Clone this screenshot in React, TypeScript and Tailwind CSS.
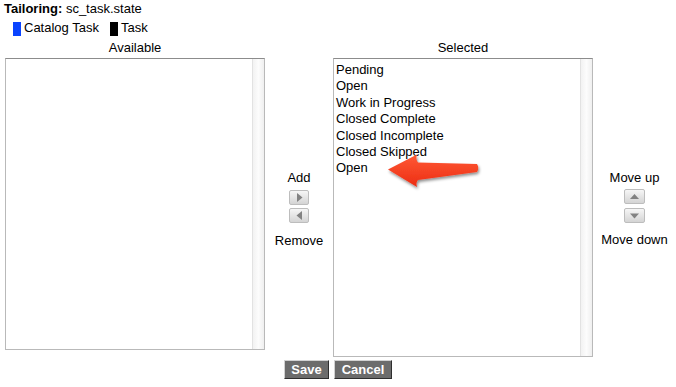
import React from "react";

function ArrowBtn({ dir }: { dir: "right" | "left" | "up" | "down" }) {
  const pts: Record<string, string> = {
    right: "7,2 12.5,6.5 7,11",
    left: "12,2 6.5,6.5 12,11",
    up: "5,9 9.5,4 14,9",
    down: "5,4.5 9.5,9.5 14,4.5",
  };
  const w = dir === "up" || dir === "down" ? 21 : 20;
  return (
    <div
      className={`${w === 21 ? "w-[21px]" : "w-[20px]"} h-[15px] rounded-[2px] border border-[#bdbdbd] bg-gradient-to-b from-[#f6f6f6] to-[#d4d4d4]`}
    >
      <svg width={w - 2} height={13} viewBox={`0 0 ${w - 2} 13`} className="block">
        <polygon points={pts[dir]} fill="#828282" />
      </svg>
    </div>
  );
}

function ListBox({ h, children }: { h: string; children?: React.ReactNode }) {
  return (
    <div
      className={`${h} w-[260px] flex border border-[#b9b9b9] border-t-[#8c8c8c] bg-white`}
    >
      <div className="flex-1 pl-[2px] pt-[3px] leading-[16.4px]">{children}</div>
      <div className="w-[12px] border-l border-[#e2e2e2] bg-gradient-to-r from-[#f2f2f2] via-[#fcfcfc] to-[#efefef]" />
    </div>
  );
}

export default function App() {
  const items = [
    "Pending",
    "Open",
    "Work in Progress",
    "Closed Complete",
    "Closed Incomplete",
    "Closed Skipped",
    "Open",
  ];
  return (
    <div
      className="relative w-[676px] h-[387px] bg-white text-black text-[13px] overflow-hidden"
      style={{ fontFamily: '"Liberation Sans", Arial, sans-serif' }}
    >
      <div className="pl-[4px] pt-[1px] leading-[16px]">
        <span className="font-bold">Tailoring:</span> sc_task.state
      </div>
      <div className="flex items-center h-[16px] mt-[3px] pl-[13px] leading-[16px]">
        <span className="w-[8px] h-[14px] bg-[#0a44ff] mt-[2px]" />
        <span className="ml-[3px]">Catalog Task</span>
        <span className="w-[8px] h-[14px] bg-black ml-[11px] mt-[2px]" />
        <span className="ml-[3px]">Task</span>
      </div>
      <div className="flex pl-[5px] mt-[4px] leading-[16px]">
        <div className="w-[260px] text-center">Available</div>
        <div className="w-[68px]" />
        <div className="w-[260px] text-center">Selected</div>
      </div>
      <div className="flex items-stretch pl-[5px] mt-[2px]">
        <div className="self-start">
          <ListBox h="h-[292px]" />
        </div>
        <div className="w-[68px] pt-[4px] flex flex-col items-center justify-center leading-[16px]">
          <div>Add</div>
          <div className="mt-[4px]">
            <ArrowBtn dir="right" />
          </div>
          <div className="mt-[3px]">
            <ArrowBtn dir="left" />
          </div>
          <div className="mt-[10px]">Remove</div>
        </div>
        <ListBox h="h-[299px]">
          {items.map((t, i) => (
            <div key={i}>{t}</div>
          ))}
        </ListBox>
        <div className="w-[83px] pt-[2px] flex flex-col items-center justify-center leading-[16px]">
          <div>Move up</div>
          <div className="mt-[3px]">
            <ArrowBtn dir="up" />
          </div>
          <div className="mt-[4px]">
            <ArrowBtn dir="down" />
          </div>
          <div className="mt-[9px]">Move down</div>
        </div>
      </div>
      <div className="flex justify-center gap-[5px] mt-[3px]">
        <button className="w-[45px] h-[19px] bg-[#6c6c6c] text-white font-bold text-[13px] leading-[16px] border border-t-[#d2d2d2] border-l-[#d2d2d2] border-b-[#2e2e2e] border-r-[#2e2e2e] text-center p-0">
          Save
        </button>
        <button className="w-[58px] h-[19px] bg-[#6c6c6c] text-white font-bold text-[13px] leading-[16px] border border-t-[#d2d2d2] border-l-[#d2d2d2] border-b-[#2e2e2e] border-r-[#2e2e2e] text-center p-0">
          Cancel
        </button>
      </div>
      <svg
        className="absolute left-0 top-0 pointer-events-none"
        width={676}
        height={387}
        viewBox="0 0 676 387"
      >
        <defs>
          <linearGradient id="ag" x1="0" y1="0" x2="0" y2="1">
            <stop offset="0" stopColor="#ff5a36" />
            <stop offset="1" stopColor="#ec2c12" />
          </linearGradient>
          <filter id="sh" x="-20%" y="-40%" width="140%" height="180%">
            <feDropShadow dx="1" dy="2" stdDeviation="1.6" floodColor="#000" floodOpacity="0.45" />
          </filter>
        </defs>
        <path
          d="M388,169.5 L417,154.5 Q415.5,159 418,162.5 L477,164 Q479.5,168 477,172 L418,180 Q415.5,183 417,187 Z"
          fill="url(#ag)"
          filter="url(#sh)"
        />
      </svg>
    </div>
  );
}
